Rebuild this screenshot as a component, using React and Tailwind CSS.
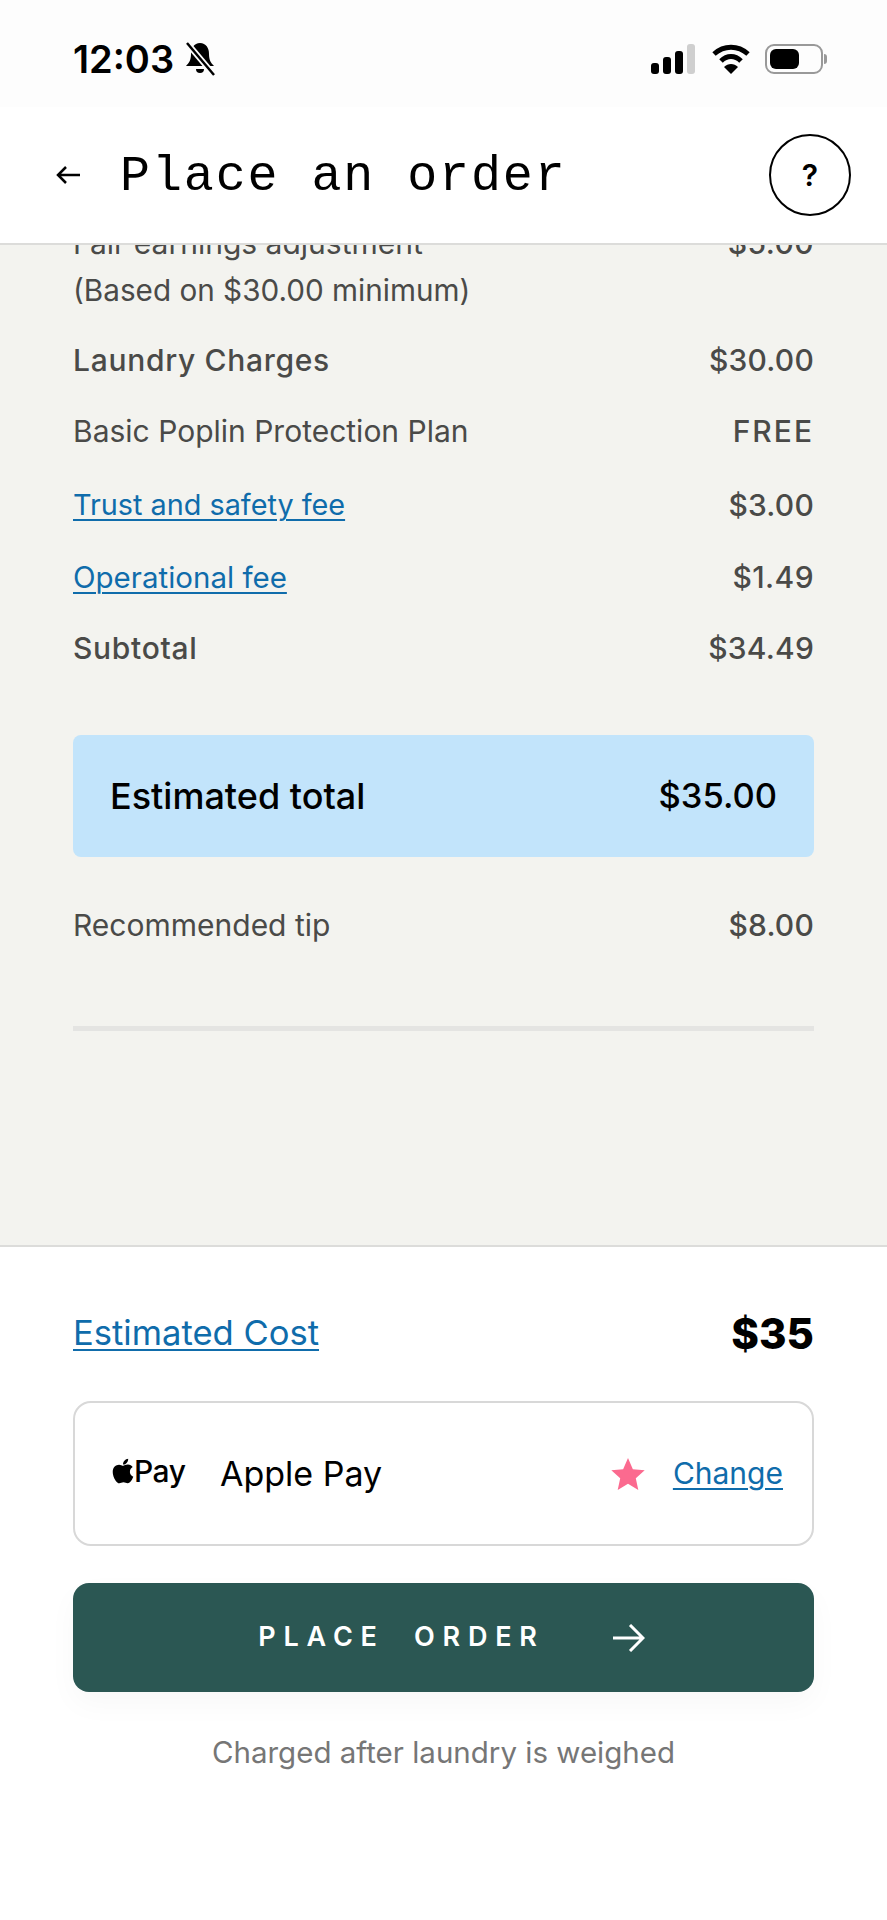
import React from 'react';
import { FaApple } from 'react-icons/fa';

const sans = "font-['Inter','Liberation_Sans',sans-serif]";

const Row = ({ label, value, bold, link, valueClass = 'tracking-[0.4px]', className }) => (
  <div className={`flex justify-between items-center h-[36px] text-[#4a4a48] text-[30px] ${className}`}>
    {link ? (
      <span className={`text-[#0f6cab] underline underline-offset-[4px] decoration-2 ${link}`}>{label}</span>
    ) : (
      <span className={bold ? 'font-medium tracking-[0.7px]' : ''}>{label}</span>
    )}
    <span className={`font-medium ${valueClass}`}>{value}</span>
  </div>
);

const StatusBar = () => (
  <div className="h-[107px] bg-[#fdfdfd] flex justify-between items-center pl-[73px] pr-[60px] pt-[10px] shrink-0">
    <div className="flex items-center gap-[10px]">
      <span className="text-[38px] font-semibold text-black leading-none">12:03</span>
      <svg width="32" height="34" viewBox="0 0 32 34">
        <path d="M16 1C10 1 7 6 7 12C7 18 5 21 2 24H30C27 21 25 18 25 12C25 6 22 1 16 1Z" fill="#000" />
        <path d="M12 27a4 4 0 0 0 8 0Z" fill="#000" />
        <path d="M3 1L30 33" stroke="#fdfdfd" strokeWidth="6" />
        <path d="M3 1L30 33" stroke="#000" strokeWidth="2.5" />
      </svg>
    </div>
    <div className="flex items-center gap-[15px]">
      <svg width="46" height="30" viewBox="0 0 46 30">
        <rect x="0" y="19" width="8" height="11" rx="3" fill="#000" />
        <rect x="12" y="13" width="8" height="17" rx="3" fill="#000" />
        <rect x="24" y="7" width="8" height="23" rx="3" fill="#000" />
        <rect x="36" y="0" width="8" height="30" rx="3" fill="#cfcfcf" />
      </svg>
      <svg width="38" height="30" viewBox="0 0 38 30">
        <path d="M2 10 C12 1 26 1 36 10" fill="none" stroke="#000" strokeWidth="5" />
        <path d="M9 17 C15 11 23 11 29 17" fill="none" stroke="#000" strokeWidth="5" />
        <path d="M19 30 L12 23 C16 19 22 19 26 23 Z" fill="#000" />
      </svg>
      <div className="flex items-center gap-[1px]">
        <div className="w-[58px] h-[30px] border-2 border-[#999] rounded-[9px] p-[3px]">
          <div className="w-[29px] h-full bg-black rounded-[6px]" />
        </div>
        <div className="w-[3px] h-[10px] bg-[#999] rounded-r" />
      </div>
    </div>
  </div>
);

export default function App() {
  return (
    <div className={`${sans} w-[887px] h-[1920px] flex flex-col bg-white overflow-hidden`}>
      <StatusBar />
      <div className="h-[138px] bg-white border-b-2 border-[#dcdcda] flex items-center justify-between pl-[56px] pr-[36px] shrink-0 z-10">
        <div className="flex items-center gap-[40px]">
          <svg width="24" height="20" viewBox="0 0 24 20">
            <path d="M24 10H2M10 2L2 10L10 18" fill="none" stroke="#000" strokeWidth="2.5" />
          </svg>
          <span className="font-['Liberation_Mono',monospace] text-[50px] tracking-[1.9px] text-black leading-none translate-y-[2px]">Place an order</span>
        </div>
        <div className="w-[82px] h-[82px] rounded-full border-2 border-black flex items-center justify-center text-[30px] font-semibold text-black">?</div>
      </div>

      <div className="h-[1000px] bg-[#f3f3ef] px-[73px] overflow-hidden shrink-0 flex flex-col">
        <Row label="Fair earnings adjustment" value="$5.00" className="-mt-[20px]" />
        <div className="text-[29.7px] text-[#4a4a48] h-[36px] leading-[36px] mt-[11px]">(Based on $30.00 minimum)</div>
        <Row label="Laundry Charges" value="$30.00" valueClass="tracking-[0.2px]" bold className="mt-[34px]" />
        <Row label="Basic Poplin Protection Plan" value="FREE" valueClass="tracking-[2px]" className="mt-[35px]" />
        <Row label="Trust and safety fee" value="$3.00" valueClass="tracking-[0.2px]" link="text-[28.8px]" className="mt-[38px]" />
        <Row label="Operational fee" value="$1.49" link="text-[29.5px]" className="mt-[36px]" />
        <Row label="Subtotal" value="$34.49" valueClass="tracking-[0.2px]" bold className="mt-[35px]" />
        <div className="mt-[69px] h-[122px] bg-[#c2e4fb] rounded-[8px] flex items-center justify-between px-[37px] text-[36px] font-medium text-black shrink-0">
          <span>Estimated total</span>
          <span className="text-[34.5px]">$35.00</span>
        </div>
        <Row label="Recommended tip" value="$8.00" valueClass="tracking-[0.2px]" className="mt-[50px]" />
        <div className="mt-[83px] h-[5px] bg-[#e4e4e2] shrink-0" />
      </div>

      <div className="border-t-2 border-[#dcdcda] flex-1 bg-white px-[73px] flex flex-col">
        <div className="flex justify-between items-center mt-[64px] h-[44px]">
          <span className="text-[34.6px] text-[#0f6cab] underline underline-offset-[4px] decoration-2">Estimated Cost</span>
          <span className="text-[42px] font-extrabold text-black">$35</span>
        </div>
        <div className="mt-[46px] h-[145px] border-2 border-[#d8d8d8] rounded-[18px] flex items-center justify-between pl-[34px] pr-[29px]">
          <div className="flex items-center">
            <div className="flex items-center text-black w-[111px] -translate-y-[3px]">
              <FaApple className="text-[28px]" />
              <span className="text-[30px] font-medium leading-none -ml-[3px] tracking-[-0.5px]">Pay</span>
            </div>
            <span className="text-[34px] text-black">Apple Pay</span>
          </div>
          <div className="flex items-center gap-[28px]">
            <svg width="34" height="32" viewBox="0 0 24 23">
              <path d="M12 0L15.5 8L24 8.8L17.6 14.5L19.4 23L12 18.5L4.6 23L6.4 14.5L0 8.8L8.5 8Z" fill="#fb6a8f" />
            </svg>
            <span className="text-[30px] text-[#0f6cab] underline underline-offset-[4px] decoration-2">Change</span>
          </div>
        </div>
        <div className="mt-[37px] h-[109px] bg-[#2b5753] rounded-[16px] flex items-center justify-center gap-[68px] shadow-[0_12px_30px_rgba(0,0,0,0.03)]">
          <span className="text-white text-[27px] tracking-[7.8px] whitespace-pre font-semibold translate-x-[8px]">PLACE  ORDER</span>
          <svg width="32" height="28" viewBox="0 0 32 28" className="translate-x-[8px]">
            <path d="M0 14H30M17 1L30 14L17 27" fill="none" stroke="#fff" strokeWidth="3" />
          </svg>
        </div>
        <div className="mt-[38px] text-center text-[29.5px] text-[#767676]">Charged after laundry is weighed</div>
      </div>
    </div>
  );
}
